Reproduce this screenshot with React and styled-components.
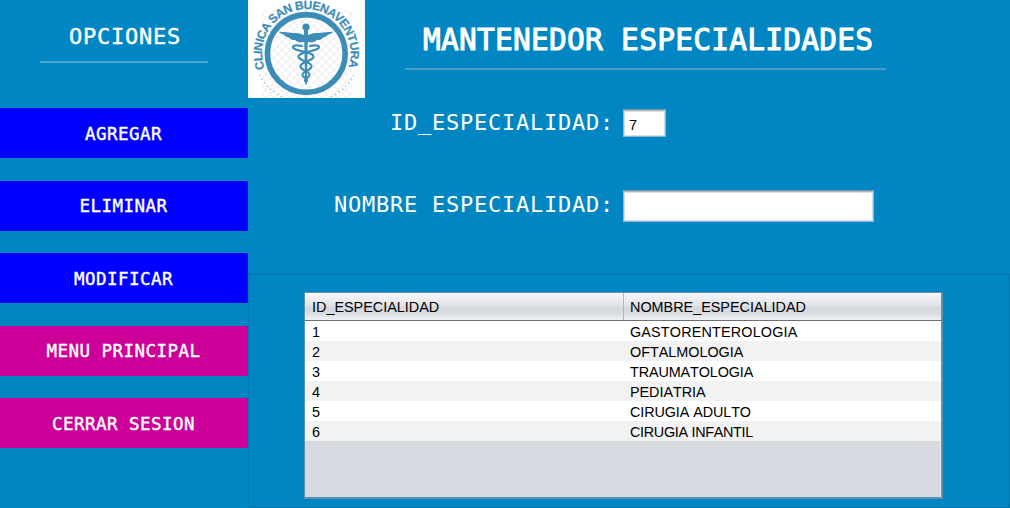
import React from "react";
import styled, { createGlobalStyle } from "styled-components";

const Global = createGlobalStyle`
  *, *::before, *::after { box-sizing: border-box; }
  body { margin: 0; background: #0087c3; overflow: hidden; }
`;

const Window = styled.div`
  display: flex;
  width: 1010px;
  height: 508px;
  background: #0087c3;
  color: #fff;
  font-family: "DejaVu Sans Mono", "Liberation Mono", monospace;
`;

const Sidebar = styled.aside`
  width: 248px;
  height: 508px;
  flex: none;
`;

const MenuHeading = styled.h2`
  margin: 0 40px 45px;
  width: 168px;
  height: 63px;
  padding: 20px 0 0 2px;
  border-bottom: 2px solid #4ca4cf;
  font-size: 22px;
  font-weight: 400;
  line-height: 33px;
  letter-spacing: 0.76px;
  text-align: center;
  -webkit-text-stroke: 0.4px #fff;
`;

const Menu = styled.nav`
  display: flex;
  flex-direction: column;
  gap: 22.5px;
`;

const MenuButton = styled.button`
  height: 50px;
  border: 0;
  padding: 1px 1px 0 0;
  background: ${(p) => (p.$accent ? "#cc0099" : "#0000ff")};
  color: #fff;
  font: 400 17.5px/48px "DejaVu Sans Mono", "Liberation Mono", monospace;
  letter-spacing: 0.46px;
  text-align: center;
  -webkit-text-stroke: 0.4px #fff;
`;

const Main = styled.main`
  display: flex;
  flex-direction: column;
  width: 762px;
`;

const FormPanel = styled.section`
  height: 273px;
`;

const Header = styled.header`
  display: flex;
  height: 98px;
`;

const Logo = styled.svg`
  display: block;
  flex: none;
  width: 117px;
  height: 98px;
  background: #fff;
  overflow: hidden;
`;

const Title = styled.h1`
  width: 481px;
  height: 70px;
  margin: 0 0 0 40px;
  padding: 19px 0 0 18px;
  border-bottom: 2px solid #4a9cc6;
  font-size: 29.5px;
  font-weight: 400;
  line-height: 42px;
  letter-spacing: 0.25px;
  white-space: nowrap;
  -webkit-text-stroke: 1px #fff;
`;

const Field = styled.label`
  display: flex;
  align-items: flex-start;
  height: ${(p) => p.$height}px;
  margin-top: ${(p) => p.$top}px;
`;

const FieldName = styled.span`
  width: 366px;
  margin-right: 9px;
  padding-top: ${(p) => p.$drop || 0}px;
  font-size: 22px;
  line-height: 28px;
  letter-spacing: 0.76px;
  text-align: right;
  white-space: nowrap;
`;

const TextInput = styled.input`
  width: ${(p) => p.$width}px;
  height: ${(p) => p.$height}px;
  border: 1px solid #8db9ce;
  border-top-color: #6f9db4;
  border-radius: 0;
  padding: 3px 5px 0;
  background: #fff;
  box-shadow: inset 0 1px 0 #b0b2b5, inset 0 2px 0 #dddfe0, inset 1px 0 0 #d6dadd, inset -1px 0 0 #d6dadd, inset 0 -1px 0 #dcdfe1;
  color: #000;
  font: 14.5px "Liberation Sans", Arial, sans-serif;
  outline: 0;
`;

const TablePanel = styled.section`
  height: 235px;
  padding: 17px 0 0 55px;
  border: 1px solid #0078af;
  border-top: 2px solid #0079b0;
`;

const TableFrame = styled.div`
  width: 639px;
  height: 207px;
  border: 1px solid #5b93ae;
  border-width: 1px 2px 2px 1px;
  background: #d6d9e0;
  box-shadow: inset -1px 0 0 #e9edf0;
  color: #000;
  font: 14.4px/20px "Liberation Sans", Arial, sans-serif;
  font-kerning: none;
`;

const HeadRow = styled.div`
  display: grid;
  grid-template-columns: 319px 1fr;
  height: 28px;
  border-bottom: 1px solid #6c6f75;
  background: linear-gradient(#f8f8fa 0%, #e1e3e7 46%, #d6d8de 54%, #d9dce1 75%, #eff1f6 100%);
`;

const HeadCell = styled.div`
  padding: 4px 0 0 ${(p) => (p.$last ? "6px" : "7px")};
  border-right: ${(p) => (p.$last ? "0" : "1px solid #b3b6bd")};
`;

const Row = styled.div`
  display: grid;
  grid-template-columns: 319px 1fr;
  height: 20px;
  padding-top: 1px;
  background: ${(p) => (p.$alt ? "#f2f2f2" : "#fff")};
`;

const Cell = styled.div`
  padding-left: ${(p) => (p.$last ? "6px" : "7px")};
  white-space: nowrap;
  letter-spacing: ${(p) => p.$tracking || 0}px;
`;

const ITEMS = [
  { id: "1", name: "GASTORENTEROLOGIA", tracking: 0.16 },
  { id: "2", name: "OFTALMOLOGIA", tracking: -0.02 },
  { id: "3", name: "TRAUMATOLOGIA", tracking: -0.12 },
  { id: "4", name: "PEDIATRIA", tracking: -0.05 },
  { id: "5", name: "CIRUGIA ADULTO", tracking: -0.1 },
  { id: "6", name: "CIRUGIA INFANTIL", tracking: -0.31 },
];

const ACTIONS = [
  { label: "AGREGAR" },
  { label: "ELIMINAR" },
  { label: "MODIFICAR" },
  { label: "MENU PRINCIPAL", accent: true },
  { label: "CERRAR SESION", accent: true },
];

function ClinicLogo() {
  return (
    <Logo viewBox="0 0 117 98">
      <defs>
        <pattern id="checks" width="8" height="8" patternUnits="userSpaceOnUse">
          <path d="M0 0h4v4H0zM4 4h4v4H4z" fill="#f5f5f6" />
        </pattern>
        <path id="nameArc" d="M17.4 70.5 A44.3 44.3 0 1 1 99.2 70.5" />
      </defs>
      <rect x="14" y="10" width="90" height="88" fill="url(#checks)" />
      <circle cx="58.3" cy="53.5" r="38.9" fill="none" stroke="#3b8db8" strokeWidth="5.6" />
      <text
        fill="#3b8db8"
        stroke="#3b8db8"
        strokeWidth="0.2"
        fontFamily="Liberation Sans Narrow, Liberation Sans, Arial, sans-serif"
        fontWeight="700"
        fontSize="12"
      >
        <textPath href="#nameArc" startOffset="2" textLength="168" lengthAdjust="spacing">
          CLINICA SAN BUENAVENTURA
        </textPath>
      </text>
      <path
        d="M11 75 A50 50 0 0 0 37 98M106 75 A50 50 0 0 1 80 98"
        fill="none"
        stroke="#8fb9d0"
        strokeWidth="1.2"
        strokeDasharray="1.4 3"
      />
      <g fill="#3b8db8">
        <circle cx="58" cy="27" r="3.6" />
        <path d="M56 29h4l-1.2 55.5h-1.6z" />
        <path d="M57 35.5C51 32 44 33.5 38 32.2C35.5 31.8 33 32 30.3 31.8C32.5 33.3 34 34.2 36 34.6C37 36.5 39 37.5 41 37.4C42.5 39.4 45 40.5 47 40C49 42.5 54 42.5 57 42z" />
        <path d="M59 35.5C65 32 72 33.5 78 32.2C80.5 31.8 83 32 85.7 31.8C83.5 33.3 82 34.2 80 34.6C79 36.5 77 37.5 75 37.4C73.5 39.4 71 40.5 69 40C67 42.5 62 42.5 59 42z" />
      </g>
      <g fill="none" stroke="#3b8db8" strokeWidth="2.1" strokeLinecap="round">
        <path d="M54 46C49 45 44.5 45 45 47.5C45.8 51.5 65 51 65.5 56.5C66 61 52 61.5 52.5 66.5C53 70.5 62 71 61.5 75C61 78 56.5 77.5 57 81" />
        <path d="M62 46C67 45 71.5 45 71 47.5C70.2 51.5 51 51 50.5 56.5C50 61 64 61.5 63.5 66.5C63 70.5 54 71 54.5 75C55 78 59.5 77.5 59 81" />
      </g>
    </Logo>
  );
}

export default function App() {
  return (
    <>
      <Global />
      <Window>
        <Sidebar>
          <MenuHeading>OPCIONES</MenuHeading>
          <Menu>
            {ACTIONS.map((a) => (
              <MenuButton key={a.label} $accent={a.accent}>
                {a.label}
              </MenuButton>
            ))}
          </Menu>
        </Sidebar>
        <Main>
          <FormPanel>
            <Header>
              <ClinicLogo />
              <Title>MANTENEDOR ESPECIALIDADES</Title>
            </Header>
            <Field $top={11} $height={28}>
              <FieldName>ID_ESPECIALIDAD:</FieldName>
              <TextInput $width={43} $height={28} defaultValue="7" />
            </Field>
            <Field $top={53} $height={32}>
              <FieldName $drop={1}>NOMBRE ESPECIALIDAD:</FieldName>
              <TextInput $width={251} $height={32} defaultValue="" />
            </Field>
          </FormPanel>
          <TablePanel>
            <TableFrame>
              <HeadRow>
                <HeadCell>ID_ESPECIALIDAD</HeadCell>
                <HeadCell $last>NOMBRE_ESPECIALIDAD</HeadCell>
              </HeadRow>
              {ITEMS.map((item, i) => (
                <Row key={item.id} $alt={i % 2 === 1}>
                  <Cell>{item.id}</Cell>
                  <Cell $last $tracking={item.tracking}>
                    {item.name}
                  </Cell>
                </Row>
              ))}
            </TableFrame>
          </TablePanel>
        </Main>
      </Window>
    </>
  );
}
